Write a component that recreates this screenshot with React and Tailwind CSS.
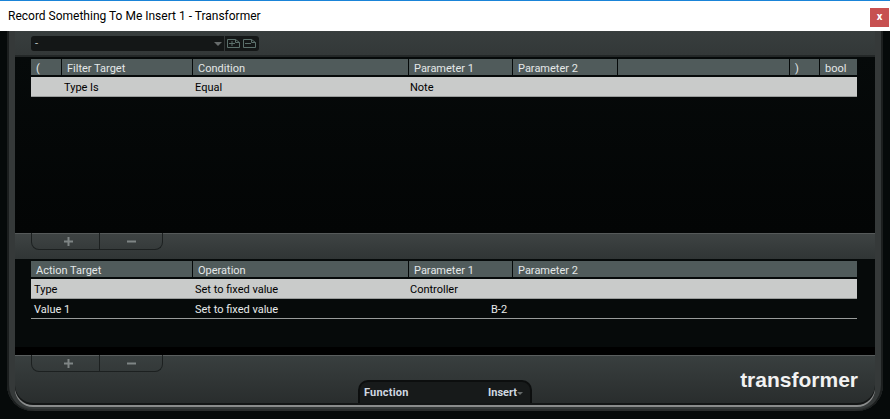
import React from 'react'

const font = "[font-family:'Roboto',sans-serif]"
const topCols = 'grid-cols-[30px_130px_215px_103px_104px_171px_29px_37px]'
const bottomCols = 'grid-cols-[161px_215px_103px_344px]'

function HeaderRow({ cols, cells }) {
  return (
    <div className={`grid gap-x-px ${cols} h-[16px] text-[11px] leading-[18px] text-[#e4e8e8]`}>
      {cells.map((c, i) => (
        <div key={i} className="bg-[#505b5b] pl-[5px] pt-[1px] truncate">{c}</div>
      ))}
    </div>
  )
}

function AddRemove() {
  return (
    <div className="flex h-[17px] w-[132px] rounded-b-[8px] border-x border-b border-[#1c2020] text-[#7f8585]">
      <div className="w-[68px] pl-[5px] border-r border-[#1c2020] flex items-center justify-center">
        <svg width="9" height="9" viewBox="0 0 9 9"><path d="M0 4.5h9M4.5 0v9" stroke="currentColor" strokeWidth="2" /></svg>
      </div>
      <div className="flex-1 flex items-center justify-center">
        <svg width="9" height="9" viewBox="0 0 9 9"><path d="M0 4.5h9" stroke="currentColor" strokeWidth="2" /></svg>
      </div>
    </div>
  )
}

function PageIcon({ minus }) {
  return (
    <svg width="13" height="9" viewBox="0 0 13 9" fill="none" stroke="#5c716c">
      <path d="M.5.5h8l4 3v5H.5z" />
      <path d="M8.5.5v3h4" />
      <path d="M2 4.5h6" />
      {!minus && <path d="M5 2v5" />}
    </svg>
  )
}

export default function App() {
  return (
    <div className={`w-[890px] h-[419px] flex flex-col overflow-hidden bg-[#060a0a] ${font}`}>
      <div className="h-[31px] shrink-0 bg-white border-t border-[#1a84d8] flex items-start justify-between">
        <span className="pl-2 pt-[7px] text-[12px] leading-[17px] text-black">Record Something To Me Insert 1 - Transformer</span>
        <div className="mt-[7px] mr-px w-[19px] h-[19px] bg-[#c75050] text-white text-[11px] font-bold leading-[18px] text-center">x</div>
      </div>

      <div className="flex-1 min-h-0 px-[7px] pb-[8px]">
        <div className="h-full px-[8px] pb-[8px] rounded-b-[26px] bg-[#353939] shadow-[inset_2px_0_0_#1c1f1f,inset_-2px_0_0_#1c1f1f,inset_0_-2px_0_#2a2d2d]">
          <div className="h-full flex flex-col rounded-b-[18px] overflow-hidden bg-[#060a0a] shadow-[0_2px_0_#141616,0_4px_0_#8a8c8c]">
            <div className="h-[26px] shrink-0 bg-gradient-to-b from-[#383e3e] to-[#333838] pl-4 pt-[5px] border-b-2 border-[#232727]">
              <div className="w-[228px] h-[15px] rounded-[3px] bg-[#141717] flex items-center">
                <span className="w-[183px] pl-1 text-[11px] leading-[15px] text-[#c4c8c8]">-</span>
                <div className="w-0 h-0 border-x-[4px] border-t-[4px] border-x-transparent border-t-[#666b6b] mr-[2px]" />
                <div className="h-full w-[3px] border-l border-[#333838]" />
                <div className="flex gap-[3px]">
                  <PageIcon />
                  <PageIcon minus />
                </div>
              </div>
            </div>

            <div className="h-[176px] shrink-0 pl-4 pt-[2px] bg-gradient-to-b from-[#060a0a] to-[#030505]">
              <HeaderRow cols={topCols} cells={['(', 'Filter Target', 'Condition', 'Parameter 1', 'Parameter 2', '', ')', 'bool']} />
              <div className="mt-[2px] pt-[1px] w-[826px] h-[20px] border-b border-[#999c9b] bg-[#c9cbca] text-[11px] leading-[20px] text-black flex">
                <span className="ml-[33px] w-[131px]">Type Is</span>
                <span className="w-[215px]">Equal</span>
                <span>Note</span>
              </div>
            </div>

            <div className="h-[26px] shrink-0 bg-gradient-to-b from-[#3e4343] to-[#303535] border-t border-[#555959]">
              <div className="pl-4 -mt-px"><AddRemove /></div>
            </div>

            <div className="flex-1 min-h-0 pl-4 pt-[2px] bg-[#060a0a] text-[11px] border-b-[8px] border-black">
              <HeaderRow cols={bottomCols} cells={['Action Target', 'Operation', 'Parameter 1', 'Parameter 2']} />
              <div className="mt-[2px] pt-[1px] w-[826px] h-[20px] border-b border-[#999c9b] bg-[#c9cbca] leading-[20px] text-black flex">
                <span className="ml-[3px] w-[161px]">Type</span>
                <span className="w-[215px]">Set to fixed value</span>
                <span>Controller</span>
              </div>
              <div className="pt-[1px] w-[826px] h-[20px] border-b border-[#999c9b] leading-[20px] text-[#e8ebeb] flex">
                <span className="ml-[3px] w-[161px]">Value 1</span>
                <span className="w-[296px]">Set to fixed value</span>
                <span>B-2</span>
              </div>
            </div>

            <div className="h-[48px] shrink-0 grid grid-cols-[343px_174px_1fr] bg-gradient-to-b from-[#393f3f] to-[#292d2d] border-t border-[#5a5e5e]">
              <div className="pl-4 -mt-px"><AddRemove /></div>
              <div className="self-end h-[23px] pt-[1px] rounded-t-[10px] border-x-2 border-t-2 border-[#0c0e0e] bg-[#171a1a] flex items-center justify-between pl-[4px] pr-[7px] text-[11px] font-bold text-[#d0d8e0]">
                <span className="tracking-[0.2px]">Function</span>
                <span className="flex items-center">
                  Insert
                  <span className="w-0 h-0 border-x-[3px] border-t-[3px] border-x-transparent border-t-[#666b6b]" />
                </span>
              </div>
              <div className="text-right pr-[17px] pt-[12px] font-['Liberation_Sans',sans-serif] font-bold text-[21px] leading-[24px] text-[#f2f2f2]">transformer</div>
            </div>
          </div>
        </div>
      </div>
    </div>
  )
}
